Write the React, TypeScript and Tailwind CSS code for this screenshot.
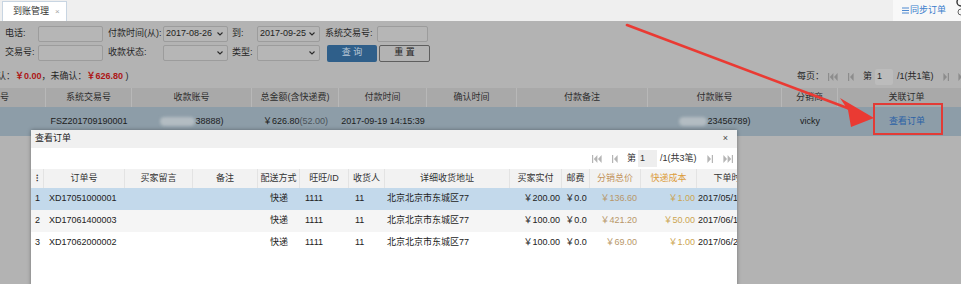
import React from "react";

type Kind = "first" | "prev" | "next" | "last";

function PagerIcon({ kind, color }: { kind: Kind; color: string }) {
  if (kind === "first")
    return (
      <svg width="10" height="8" viewBox="0 0 10 8" fill={color}>
        <rect x="0" y="0" width="1.2" height="8" />
        <polygon points="5.4,0 1.8,4 5.4,8" />
        <polygon points="9.6,0 6,4 9.6,8" />
      </svg>
    );
  if (kind === "prev")
    return (
      <svg width="6" height="8" viewBox="0 0 6 8" fill={color}>
        <rect x="0" y="0" width="1.2" height="8" />
        <polygon points="5.6,0 2,4 5.6,8" />
      </svg>
    );
  if (kind === "next")
    return (
      <svg width="6" height="8" viewBox="0 0 6 8" fill={color}>
        <polygon points="0.4,0 4,4 0.4,8" />
        <rect x="4.8" y="0" width="1.2" height="8" />
      </svg>
    );
  return (
    <svg width="10" height="8" viewBox="0 0 10 8" fill={color}>
      <polygon points="0.4,0 4,4 0.4,8" />
      <polygon points="4.6,0 8.2,4 4.6,8" />
      <rect x="8.8" y="0" width="1.2" height="8" />
    </svg>
  );
}

function Chevron() {
  return (
    <svg width="6" height="4" viewBox="0 0 6 4" className="ml-auto shrink-0">
      <path d="M0.5 0.5 L3 3 L5.5 0.5" stroke="#2a2a2a" strokeWidth="1.1" fill="none" />
    </svg>
  );
}

const inputCls = "h-[16px] shrink-0 rounded-[2px] border border-[#9c9c9c] bg-[#b6b6b6]";

function Select({ w, value }: { w: string; value?: string }) {
  return (
    <div className={`${w} ${inputCls} flex items-center pl-[2px] pr-[4px] text-[9px] text-[#222]`}>
      {value && <span>{value}</span>}
      <Chevron />
    </div>
  );
}

const mainCols = [
  { w: "w-[46px]", title: "号", align: "justify-start" },
  { w: "w-[86px]", title: "系统交易号", align: "justify-center" },
  { w: "w-[120px]", title: "收款账号", align: "justify-center" },
  { w: "w-[87px]", title: "总金额(含快递费)", align: "justify-center" },
  { w: "w-[88px]", title: "付款时间", align: "justify-center" },
  { w: "w-[90px]", title: "确认时间", align: "justify-center" },
  { w: "w-[131px]", title: "付款备注", align: "justify-center" },
  { w: "w-[134px]", title: "付款账号", align: "justify-center" },
  { w: "w-[56px]", title: "分销商", align: "justify-center" },
  { w: "w-[138px]", title: "关联订单", align: "justify-center" },
];

const modalCols = [
  { w: "w-[13px]", title: "⁝", color: "text-[#333]" },
  { w: "w-[81px]", title: "订单号", color: "text-[#333]" },
  { w: "w-[68px]", title: "买家留言", color: "text-[#333]" },
  { w: "w-[65px]", title: "备注", color: "text-[#333]" },
  { w: "w-[42px]", title: "配送方式", color: "text-[#333]" },
  { w: "w-[49px]", title: "旺旺/ID", color: "text-[#333]" },
  { w: "w-[36px]", title: "收货人", color: "text-[#333]" },
  { w: "w-[125px]", title: "详细收货地址", color: "text-[#333]" },
  { w: "w-[52px]", title: "买家实付", color: "text-[#333]" },
  { w: "w-[28px]", title: "邮费", color: "text-[#333]" },
  { w: "w-[51px]", title: "分销总价", color: "text-[#c2935c]" },
  { w: "w-[56px]", title: "快递成本", color: "text-[#dc9c3c]" },
  { w: "w-[70px]", title: "下单时间", color: "text-[#333]" },
];

const orders = [
  { n: 1, id: "XD17051000001", pay: "￥200.00", total: "￥136.60", ship: "￥1.00", date: "2017/05/10", bg: "bg-[#c3d9eb]" },
  { n: 2, id: "XD17061400003", pay: "￥100.00", total: "￥421.20", ship: "￥50.00", date: "2017/06/14", bg: "bg-[#f5f5f5]" },
  { n: 3, id: "XD17062000002", pay: "￥100.00", total: "￥69.00", ship: "￥1.00", date: "2017/06/20", bg: "bg-white" },
];

export default function App() {
  return (
    <div className="relative h-[284px] w-[961px] overflow-hidden bg-[#b3b3b3] font-['Liberation_Sans','Noto_Sans_CJK_SC',sans-serif] text-[9px] text-[#262626]">
      {/* tab bar */}
      <div className="flex h-[21px] bg-[#efefef]">
        <div className="ml-[2px] mt-[1px] flex h-[20px] w-[65px] items-center border border-b-0 border-[#c8d5e2] bg-white pl-[10px] text-[#333]">
          <span>到账管理</span>
          <span className="ml-[6px] text-[8px] text-[#a5a5a5]">×</span>
        </div>
        <div className="ml-auto flex w-[68px] items-center bg-[#f8f8f8] pl-[9px] text-[#3b7dcc]">
          <svg width="7" height="7" viewBox="0 0 7 7" className="mr-[1px]">
            <path d="M0 1H7M0 3.5H7M0 6H7" stroke="#3b7dcc" strokeWidth="0.9" />
          </svg>
          <span>同步订单</span>
        </div>
      </div>

      {/* search form */}
      <div className="mt-[5px] flex h-[16px] items-center pl-[5px]">
        <span className="w-[33px] shrink-0">电话:</span>
        <div className={`w-[65px] ${inputCls}`} />
        <span className="ml-[5px] w-[55px] shrink-0">付款时间(从):</span>
        <Select w="w-[65px]" value="2017-08-26" />
        <span className="ml-[4px] w-[25px] shrink-0">到:</span>
        <Select w="w-[63px]" value="2017-09-25" />
        <span className="ml-[5px] w-[52px] shrink-0">系统交易号:</span>
        <div className={`w-[51px] ${inputCls}`} />
      </div>
      <div className="mt-[2px] flex h-[18px] items-center pl-[5px]">
        <span className="w-[33px] shrink-0">交易号:</span>
        <div className={`w-[65px] ${inputCls}`} />
        <span className="ml-[5px] w-[55px] shrink-0">收款状态:</span>
        <Select w="w-[65px]" />
        <span className="ml-[4px] w-[25px] shrink-0">类型:</span>
        <Select w="w-[63px]" />
        <button className="ml-[7px] flex h-[17px] w-[50px] items-center justify-center rounded-[2px] bg-[#2f5f8a] text-[#b9c8d6]">
          查 询
        </button>
        <button className="ml-[2px] flex h-[17px] w-[51px] items-center justify-center rounded-[2px] border border-[#5f5f5f] bg-[#b3b3b3] text-[#1f1f1f]">
          重 置
        </button>
      </div>

      {/* summary + pager */}
      <div className="mt-[7px] flex h-[16px] items-center whitespace-nowrap">
        <div className="-ml-[3px] w-[800px] shrink-0">
          认：<b className="text-[#ad1616]">￥0.00</b>，未确认：<b className="text-[#ad1616]">￥626.80</b> )
        </div>
        <span className="w-[31px] shrink-0">每页：</span>
        <div className="w-[20px] shrink-0"><PagerIcon kind="first" color="#8c8c8c" /></div>
        <div className="w-[15px] shrink-0"><PagerIcon kind="prev" color="#8c8c8c" /></div>
        <span className="w-[12px] shrink-0">第</span>
        <div className="flex h-[16px] w-[18px] shrink-0 items-center rounded-[2px] bg-[#bcbcbc] pl-[2px]">1</div>
        <span className="w-[50px] shrink-0 pl-[4px]">/1(共1笔)</span>
        <div className="w-[15px] shrink-0"><PagerIcon kind="next" color="#8c8c8c" /></div>
        <div className="w-[10px] shrink-0"><PagerIcon kind="last" color="#8c8c8c" /></div>
      </div>

      {/* main table */}
      <div className="mt-[3px] flex h-[19px] bg-[#a9a9a9] text-[#2e2e2e]">
        {mainCols.map((c, i) => (
          <div key={i} className={`${c.w} flex shrink-0 items-center ${c.align} border-r border-[#b8b8b8]`}>
            {c.title}
          </div>
        ))}
      </div>
      <div className="flex h-[29px] items-center whitespace-nowrap bg-[#8d9da8] text-[#1c1c1c]">
        <div className="w-[46px] shrink-0" />
        <div className="flex w-[86px] shrink-0 justify-center">FSZ201709190001</div>
        <div className="flex w-[120px] shrink-0 items-center justify-center">
          <span className="h-[9px] w-[35px] rounded-full bg-[#b3bcc2] blur-[1.5px]" />
          <span>38888)</span>
        </div>
        <div className="flex w-[87px] shrink-0 justify-center">
          ￥626.80<span className="text-[#4a5258]">(52.00)</span>
        </div>
        <div className="flex w-[88px] shrink-0 justify-center">2017-09-19 14:15:39</div>
        <div className="w-[90px] shrink-0" />
        <div className="w-[131px] shrink-0" />
        <div className="flex w-[134px] shrink-0 items-center justify-center">
          <span className="h-[9px] w-[28px] rounded-full bg-[#b3bcc2] blur-[1.5px]" />
          <span>23456789)</span>
        </div>
        <div className="flex w-[56px] shrink-0 justify-center">vicky</div>
        <div className="flex w-[138px] shrink-0 justify-center text-[#2b62a6]">查看订单</div>
      </div>

      {/* modal dialog */}
      <div className="absolute left-[31px] top-[130px] h-[160px] w-[706px] overflow-hidden bg-white shadow-[0_0_4px_rgba(0,0,0,0.35)]">
        <div className="flex h-[18px] items-center bg-[#f0f0f0] pl-[4px] pr-[9px] text-[#222]">
          <span>查看订单</span>
          <span className="ml-auto text-[9px] text-[#444]">×</span>
        </div>
        <div className="flex h-[21px] items-center justify-end pr-[4px] text-[#333]">
          <div className="w-[20px]"><PagerIcon kind="first" color="#b5b5b5" /></div>
          <div className="w-[15px]"><PagerIcon kind="prev" color="#b5b5b5" /></div>
          <span className="w-[11px]">第</span>
          <div className="flex h-[17px] w-[19px] items-center bg-[#eeeeee] pl-[2px]">1</div>
          <span className="w-[50px] pl-[3px]">/1(共3笔)</span>
          <div className="w-[16px]"><PagerIcon kind="next" color="#b5b5b5" /></div>
          <div className="w-[10px]"><PagerIcon kind="last" color="#b5b5b5" /></div>
        </div>
        <div className="flex h-[19px] bg-[#f2f2f2]">
          {modalCols.map((c, i) => (
            <div
              key={i}
              className={`${c.w} flex shrink-0 items-center justify-center border-r border-[#e3e3e3] ${c.color} ${i === 0 ? "font-bold" : ""}`}
            >
              {c.title}
            </div>
          ))}
        </div>
        {orders.map((o) => (
          <div key={o.n} className={`flex h-[22px] items-center whitespace-nowrap text-[#222] ${o.bg}`}>
            <div className="flex w-[13px] shrink-0 justify-center">{o.n}</div>
            <div className="w-[81px] shrink-0 pl-[5px]">{o.id}</div>
            <div className="w-[68px] shrink-0" />
            <div className="w-[65px] shrink-0" />
            <div className="flex w-[42px] shrink-0 justify-center">快递</div>
            <div className="w-[49px] shrink-0 pl-[5px]">1111</div>
            <div className="w-[36px] shrink-0 pl-[6px]">11</div>
            <div className="w-[125px] shrink-0 pl-[2px]">北京北京市东城区77</div>
            <div className="flex w-[52px] shrink-0 justify-end pr-[2px]">{o.pay}</div>
            <div className="flex w-[28px] shrink-0 justify-center">￥0.0</div>
            <div className="flex w-[51px] shrink-0 justify-end pr-[4px] text-[#b8976a]">{o.total}</div>
            <div className="flex w-[56px] shrink-0 justify-end pr-[2px] text-[#cca552]">{o.ship}</div>
            <div className="w-[70px] shrink-0 pl-[1px]">{o.date}</div>
          </div>
        ))}
      </div>

      {/* annotation: red frame + arrow */}
      <div className="absolute left-[873px] top-[103px] h-[32px] w-[70px] border-2 border-[#e23b36]" />
      <svg className="pointer-events-none absolute left-0 top-0" width="961" height="284">
        <line x1="627" y1="25" x2="850" y2="109" stroke="#ea3a33" strokeWidth="2.6" strokeLinecap="round" />
        <polygon points="874,118 840,98 848,110 851,127" fill="#ea3a33" />
        <circle cx="961" cy="2" r="4" stroke="#333" strokeWidth="1.4" fill="none" />
        <path d="M961 9 A3 3 0 0 0 958 12 A3 3 0 0 0 961 15" stroke="#666" strokeWidth="1" fill="none" />
      </svg>
    </div>
  );
}
